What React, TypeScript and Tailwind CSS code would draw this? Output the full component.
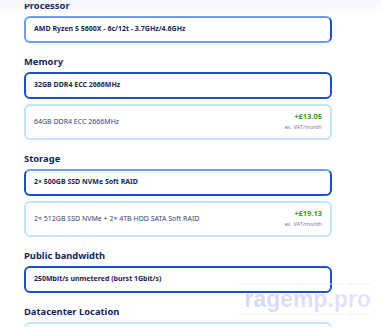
import React from 'react';

type Option = {
    label: string;
    selected?: boolean;
    price?: string;
    border?: string;
};

type Section = {
    title: string;
    options: Option[];
};

const sections: Section[] = [
    {
        title: 'Processor',
        options: [
            {
                label: 'AMD Ryzen 5 5600X - 6c/12t - 3.7GHz/4.6GHz',
                selected: true,
                border: 'border-[#6f9cec] border-r-[#1d4fc8]',
            },
        ],
    },
    {
        title: 'Memory',
        options: [
            { label: '32GB DDR4 ECC 2666MHz', selected: true, border: 'border-[#1d4fc8]' },
            { label: '64GB DDR4 ECC 2666MHz', price: '+£13.05' },
        ],
    },
    {
        title: 'Storage',
        options: [
            {
                label: '2× 500GB SSD NVMe Soft RAID',
                selected: true,
                border: 'border-[#1d4fc8] border-t-[#6f9cec]',
            },
            { label: '2× 512GB SSD NVMe + 2× 4TB HDD SATA Soft RAID', price: '+£19.13' },
        ],
    },
    {
        title: 'Public bandwidth',
        options: [
            { label: '250Mbit/s unmetered (burst 1Gbit/s)', selected: true, border: 'border-[#1d4fc8]' },
        ],
    },
    {
        title: 'Datacenter Location',
        options: [{ label: '' }],
    },
];

function OptionCard({ option }: { option: Option }) {
    if (option.selected) {
        return (
            <div className={`flex h-[27px] items-center rounded-[6px] border-2 bg-white px-[8px] ${option.border}`}>
                <span className="text-[7px] font-bold text-[#1b2550]">{option.label}</span>
            </div>
        );
    }
    return (
        <div className="flex h-[36px] items-center justify-between rounded-[6px] border-2 border-[#bfe6fa] bg-white px-[8px]">
            <span className="text-[7px] text-[#3a4270]">{option.label}</span>
            {option.price && (
                <div className="mb-[1px] flex flex-col items-end leading-none">
                    <span className="text-[7.5px] font-bold text-[#3f9a2c]">{option.price}</span>
                    <span className="mt-[4px] text-[5.5px] text-[#7a7f9e]">ex. VAT/month</span>
                </div>
            )}
        </div>
    );
}

export default function App() {
    return (
        <main
            className="relative h-[327px] w-[381px] overflow-hidden bg-white"
            style={{ fontFamily: '"Noto Sans", "Open Sans", sans-serif' }}
        >
            <div className="ml-[24px] mt-[-1px] flex w-[308px] flex-col gap-[12px]">
                {sections.map((s) => (
                    <section key={s.title} className="flex flex-col">
                        <h2 className="mb-[3px] h-[14px] text-[9.4px] font-bold leading-[14px] text-[#14245a]">
                            {s.title}
                        </h2>
                        <div className="flex flex-col gap-[5px]">
                            {s.options.map((o, i) => (
                                <OptionCard key={i} option={o} />
                            ))}
                        </div>
                    </section>
                ))}
            </div>

            <div className="pointer-events-none absolute left-0 right-0 top-0 h-[4px] bg-[#f7f8fb] shadow-[0_3px_8px_rgba(120,130,170,0.18)]" />

            <div className="pointer-events-none absolute right-[10px] top-[282px] flex flex-col items-end leading-none">
                <span className="text-[4px] tracking-[0.5px] text-[#eceef6]" style={{ fontFamily: '"Liberation Sans", sans-serif' }}>
                    ragemp.pro ragemp.pro ragemp.pro ragemp.pro ragemp.pro
                </span>
                <span
                    className="bg-gradient-to-r from-[#d3d7fb] to-[#e6e2fa] bg-clip-text text-[23px] font-bold leading-[26px] text-transparent"
                    style={{ fontFamily: '"Liberation Sans", sans-serif' }}
                >
                    ragemp.pro
                </span>
                <span className="text-[4px] tracking-[0.5px] text-[#eef0f7]" style={{ fontFamily: '"Liberation Sans", sans-serif' }}>
                    ragemp.pro ragemp.pro ragemp.pro ragemp.pro ragemp.pro
                </span>
            </div>
        </main>
    );
}
